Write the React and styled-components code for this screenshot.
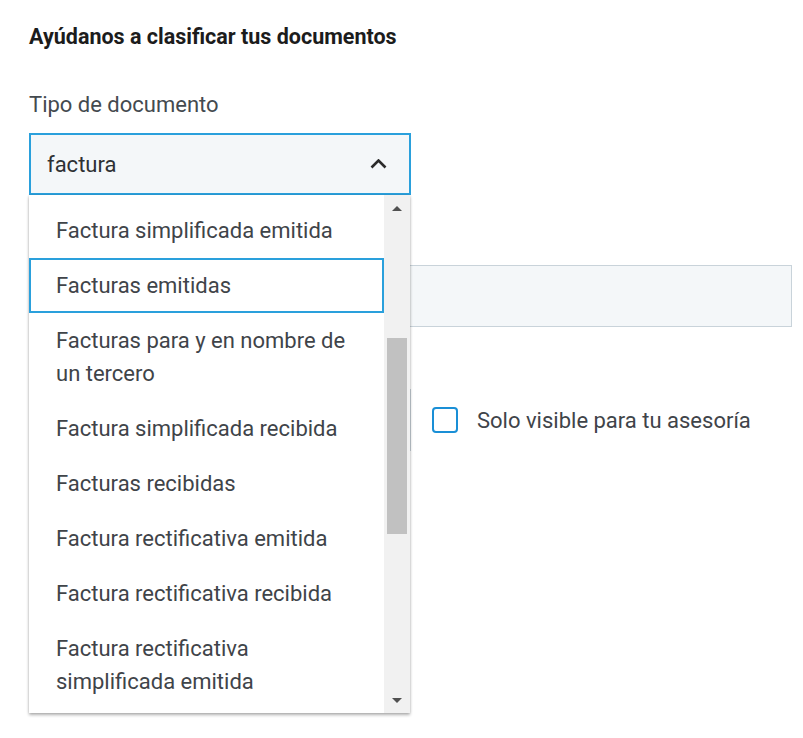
import React from 'react';
import styled, { createGlobalStyle } from 'styled-components';

const GlobalStyle = createGlobalStyle`
  body {
    margin: 0;
    background: #ffffff;
    font-family: Roboto, "Liberation Sans", Arial, sans-serif;
  }
`;

const Page = styled.div`
  box-sizing: border-box;
  min-height: 738px;
  padding: 24px 11px 0 29px;
`;

const Title = styled.h2`
  margin: 0;
  font-size: 21.5px;
  line-height: 26px;
  font-weight: 700;
  color: #1c1c1c;
`;

const Label = styled.div`
  margin-top: ${p => p.$top || 0}px;
  font-size: 22px;
  line-height: 26px;
  color: #444a4f;
`;

const SelectWrap = styled.div`
  position: relative;
  width: 382px;
  margin-top: 15px;
  z-index: 2;
`;

const SelectBox = styled.div`
  box-sizing: border-box;
  height: 62px;
  border: 2px solid #2aa0dc;
  background: #f4f7f9;
  display: flex;
  align-items: center;
  justify-content: space-between;
  padding: 0 22px 0 16px;
  font-size: 22px;
  color: #2e3134;
`;

const Dropdown = styled.div`
  position: absolute;
  top: 100%;
  left: 0;
  width: 381px;
  height: 518px;
  background: #ffffff;
  display: flex;
  box-shadow: 0 2px 3px rgba(0, 0, 0, 0.3), 0 0 2px rgba(0, 0, 0, 0.12);
`;

const List = styled.ul`
  flex: 1;
  margin: 0;
  padding: 8px 0 0;
  list-style: none;
  overflow: hidden;
`;

const Item = styled.li`
  padding: 11px 20px 11px 27px;
  font-size: 22px;
  line-height: 33px;
  color: #3f4449;
  box-shadow: ${p => (p.$active ? 'inset 0 0 0 2px #2aa0dc' : 'none')};
`;

const Scrollbar = styled.div`
  width: 26px;
  background: #f1f1f1;
  display: flex;
  flex-direction: column;
`;

const ArrowButton = styled.div`
  height: 26px;
  display: flex;
  align-items: center;
  justify-content: center;
`;

const Triangle = styled.span`
  width: 0;
  height: 0;
  border-left: 5px solid transparent;
  border-right: 5px solid transparent;
  ${p => (p.$down ? 'border-top' : 'border-bottom')}: 5px solid #505050;
`;

const Track = styled.div`
  flex: 1;
`;

const Thumb = styled.div`
  width: 20px;
  height: 196px;
  margin: 117px auto 0;
  background: #c1c1c1;
`;

const Input = styled.div`
  box-sizing: border-box;
  height: 62px;
  margin-top: ${p => p.$top || 0}px;
  border: 1px solid #c9d3da;
  background: #f4f7f9;
`;

const Row = styled.div`
  display: flex;
  align-items: flex-end;
  gap: 21px;
`;

const Field = styled.div`
  width: 382px;
`;

const CheckRow = styled.label`
  height: 62px;
  display: flex;
  align-items: center;
  gap: 19px;
  font-size: 22px;
  color: #3f4449;
`;

const CheckBox = styled.span`
  box-sizing: border-box;
  width: 26px;
  height: 26px;
  border: 2.5px solid #1a8fd6;
  border-radius: 4px;
`;

const options = [
  'Factura simplificada emitida',
  'Facturas emitidas',
  'Facturas para y en nombre de un tercero',
  'Factura simplificada recibida',
  'Facturas recibidas',
  'Factura rectificativa emitida',
  'Factura rectificativa recibida',
  'Factura rectificativa simplificada emitida',
];

export default function App() {
  return (
    <>
      <GlobalStyle />
      <Page>
        <Title>Ayúdanos a clasificar tus documentos</Title>
        <Label $top={42}>Tipo de documento</Label>
        <SelectWrap>
          <SelectBox>
            factura
            <svg width="17" height="10" viewBox="0 0 17 10">
              <polyline points="1.5,8.5 8.5,1.5 15.5,8.5" fill="none" stroke="#2b2b2b" strokeWidth="2.6" />
            </svg>
          </SelectBox>
          <Dropdown>
            <List>
              {options.map((o, i) => (
                <Item key={o} $active={i === 1}>{o}</Item>
              ))}
            </List>
            <Scrollbar>
              <ArrowButton><Triangle /></ArrowButton>
              <Track><Thumb /></Track>
              <ArrowButton><Triangle $down /></ArrowButton>
            </Scrollbar>
          </Dropdown>
        </SelectWrap>
        <Label $top={34}>Descripción</Label>
        <Input $top={10} />
        <Row>
          <Field>
            <Label $top={10}>Fecha</Label>
            <Input $top={26} />
          </Field>
          <CheckRow>
            <CheckBox />
            Solo visible para tu asesoría
          </CheckRow>
        </Row>
      </Page>
    </>
  );
}
